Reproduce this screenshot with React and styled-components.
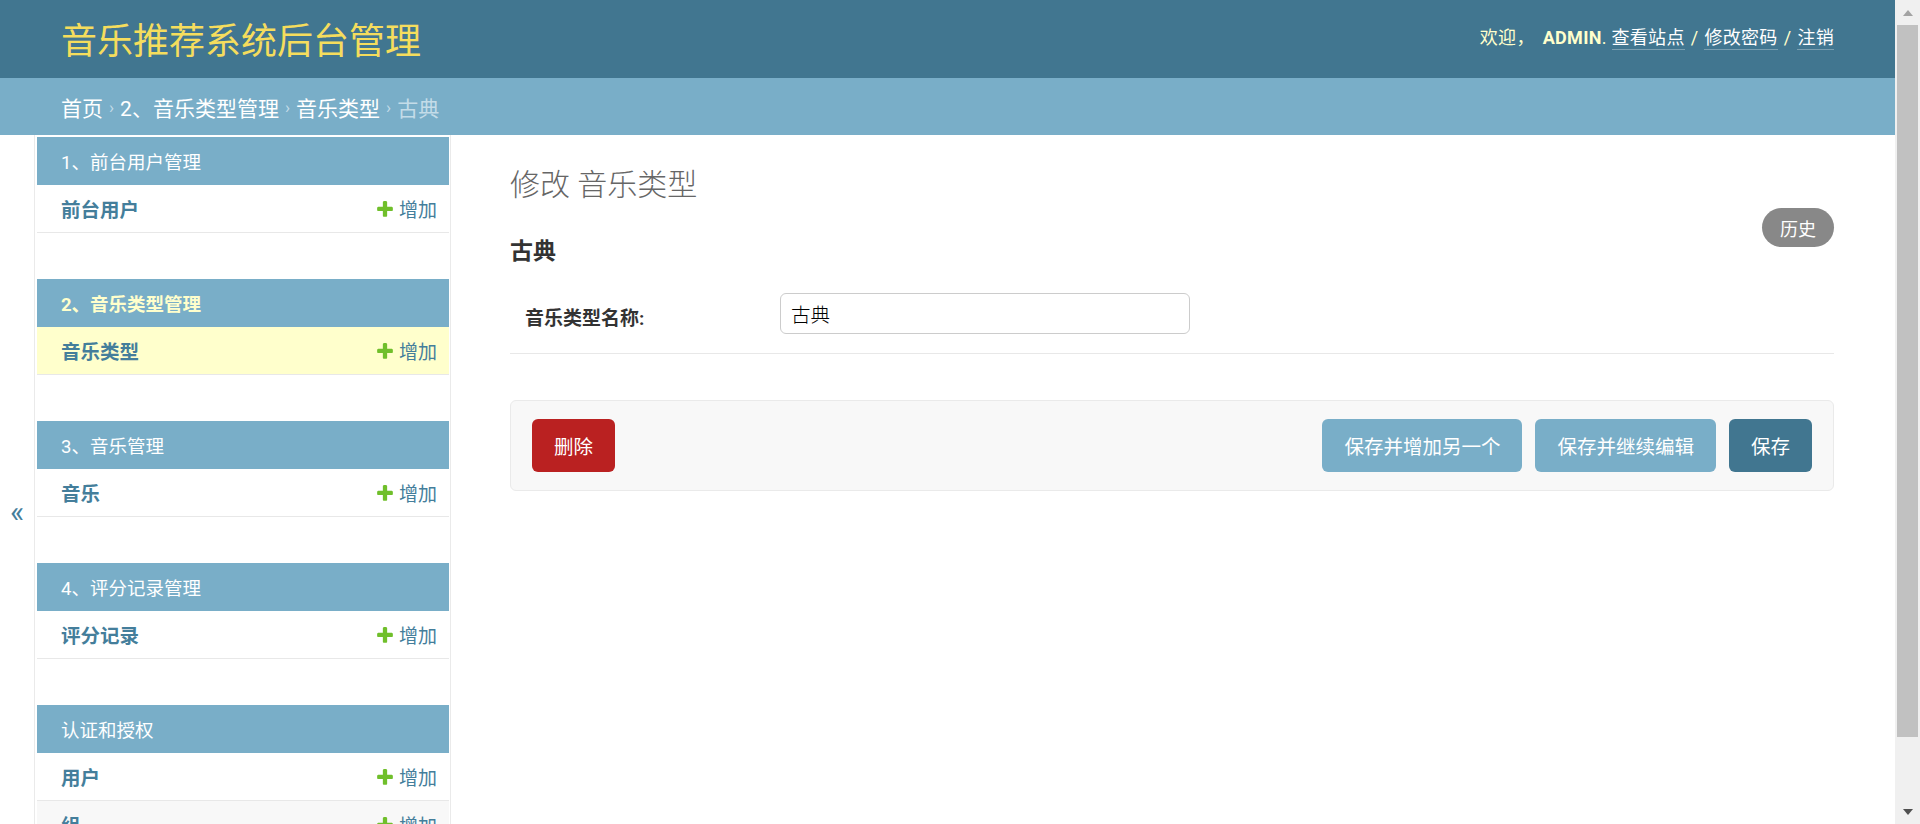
import React from "react";
import styled, { createGlobalStyle } from "styled-components";

const colors = {
  header: "#417690",
  accent: "#79aec8",
  link: "#447e9b",
  brand: "#f5dd5d",
  headerText: "#ffffcc",
  crumbText: "#c4dce8",
  hairline: "#e8e8e8",
  darkBody: "#333333",
  darkened: "#f8f8f8",
  selected: "#ffffcc",
  delete: "#ba2121",
  addGreen: "#70bf2b",
};

const GlobalStyle = createGlobalStyle`
  html, body {
    margin: 0;
    padding: 0;
    background: #fff;
    overflow: hidden;
  }
  body {
    font-family: Roboto, "Noto Sans CJK SC", "DejaVu Sans", sans-serif;
    color: ${colors.darkBody};
  }
  * { box-sizing: border-box; }
`;

const Viewport = styled.div`
  display: flex;
  height: 100vh;
  overflow: hidden;
`;

const Page = styled.div`
  flex: 1;
  min-width: 0;
  display: flex;
  flex-direction: column;
  overflow: hidden;
`;

const ScrollBar = styled.div`
  flex: 0 0 25px;
  display: flex;
  flex-direction: column;
  background: #f0f0f0;
`;

const ScrollButton = styled.div`
  flex: 0 0 25px;
  display: flex;
  align-items: center;
  justify-content: center;
`;

const Arrow = styled.span`
  width: 0;
  height: 0;
  border-left: 5.5px solid transparent;
  border-right: 5.5px solid transparent;
  ${({ $down }) =>
    $down
      ? "border-top: 6px solid #505050;"
      : "border-bottom: 6px solid #a3a3a3;"}
`;

const ScrollTrack = styled.div`
  flex: 1;
  padding: 0 2px;
`;

const ScrollThumb = styled.div`
  height: 712px;
  background: #c1c1c1;
`;

const Header = styled.header`
  display: flex;
  align-items: center;
  justify-content: space-between;
  flex: 0 0 78px;
  padding: 0 61px;
  background: ${colors.header};
  color: ${colors.headerText};
`;

const SiteName = styled.h1`
  margin: 6px 0 0;
  font-size: 36px;
  line-height: 44px;
  font-weight: 400;
  color: ${colors.brand};
`;

const UserTools = styled.div`
  font-size: 18px;
  letter-spacing: 0.3px;
  color: ${colors.headerText};
  margin-bottom: 6px;
`;

const UserName = styled.strong`
  font-weight: 700;
  text-transform: uppercase;
  margin-left: 8px;
`;

const ToolLink = styled.a`
  color: #fff;
  text-decoration: none;
  border-bottom: 1px solid rgba(255, 255, 255, 0.3);
  padding-bottom: 1px;
`;

const Sep = styled.span`
  margin: 0 6px;
`;

const Breadcrumbs = styled.nav`
  display: flex;
  align-items: center;
  flex: 0 0 57px;
  padding: 0 61px;
  background: ${colors.accent};
  color: ${colors.crumbText};
  font-size: 21px;
`;

const Crumb = styled.a`
  color: #fff;
  text-decoration: none;
`;

const CrumbSep = styled.span`
  margin: 0 6px;
  font-size: 17px;
  color: ${colors.crumbText};
`;

const Main = styled.div`
  display: flex;
  align-items: stretch;
  flex: 0 0 auto;
`;

const Toggle = styled.button`
  flex: 0 0 35px;
  display: flex;
  align-items: center;
  justify-content: center;
  padding: 0 0 6px;
  border: 0;
  border-right: 1px solid #eaeaea;
  background: #fff;
  color: ${colors.link};
  font-family: Roboto, sans-serif;
  font-size: 30px;
  line-height: 1;
  cursor: pointer;
`;

const NavSidebar = styled.nav`
  flex: 0 0 416px;
  padding: 2px 1px 0 2px;
  border-right: 1px solid #eaeaea;
`;

const Module = styled.div`
  margin-bottom: 46px;
`;

const Caption = styled.div`
  height: 48px;
  display: flex;
  align-items: center;
  padding: 0 24px;
  background: ${colors.accent};
  color: ${({ $current }) => ($current ? colors.headerText : "#fff")};
  font-weight: ${({ $current }) => ($current ? 700 : 400)};
  font-size: 18.5px;
`;

const ModelRow = styled.div`
  height: 48px;
  display: flex;
  align-items: center;
  justify-content: space-between;
  padding: 0 12px 0 24px;
  border-bottom: 1px solid ${colors.hairline};
  background: ${({ $current, $even }) =>
    $current ? colors.selected : $even ? colors.darkened : "#fff"};
`;

const ModelLink = styled.a`
  color: ${colors.link};
  font-weight: 700;
  font-size: 19.5px;
  text-decoration: none;
`;

const AddLink = styled.a`
  display: flex;
  align-items: center;
  gap: 4px;
  color: ${colors.link};
  font-size: 19px;
  text-decoration: none;
`;

const Content = styled.main`
  flex: 1;
  padding: 31px 61px 20px 59px;
`;

const Title = styled.h1`
  margin: 0;
  font-size: 30px;
  line-height: 38px;
  font-weight: 300;
  color: #666;
`;

const SubHeader = styled.div`
  display: flex;
  justify-content: space-between;
  align-items: flex-start;
  margin-top: 4px;
`;

const ObjectName = styled.h2`
  margin: 29px 0 0;
  font-size: 23px;
  line-height: 30px;
  font-weight: 700;
  color: ${colors.darkBody};
`;

const HistoryButton = styled.a`
  display: inline-flex;
  align-items: center;
  height: 39px;
  padding: 0 18px;
  border-radius: 20px;
  background: #888;
  color: #fff;
  font-size: 18px;
  text-decoration: none;
`;

const FormRow = styled.div`
  display: flex;
  align-items: center;
  margin-top: 10px;
  padding: 16px 15px 19px;
  border-bottom: 1px solid ${colors.hairline};
`;

const Label = styled.label`
  flex: 0 0 255px;
  font-weight: 700;
  font-size: 19px;
  color: ${colors.darkBody};
  padding-top: 6px;
`;

const TextInput = styled.input`
  width: 410px;
  height: 41px;
  padding: 0 10px;
  border: 1px solid #ccc;
  border-radius: 6px;
  font-family: Roboto, "Noto Sans CJK SC", sans-serif;
  font-size: 19.5px;
  font-weight: 300;
  color: #000;
  outline: none;
`;

const SubmitRow = styled.div`
  display: flex;
  align-items: center;
  gap: 13px;
  margin-top: 46px;
  padding: 18px 21px;
  background: ${colors.darkened};
  border: 1px solid #eaeaea;
  border-radius: 6px;
`;

const Button = styled.button`
  height: 53px;
  padding: 0 22px;
  border: 0;
  border-radius: 6px;
  font-family: Roboto, "Noto Sans CJK SC", sans-serif;
  font-size: 19.5px;
  font-weight: 400;
  color: #fff;
  cursor: pointer;
  background: ${({ $variant }) =>
    $variant === "delete"
      ? colors.delete
      : $variant === "default"
      ? colors.header
      : colors.accent};
  margin-left: ${({ $push }) => ($push ? "auto" : "0")};
`;

function PlusIcon() {
  return (
    <svg width="20" height="20" viewBox="0 0 1792 1792">
      <path
        fill={colors.addGreen}
        d="M1600 796v192q0 40-28 68t-68 28h-416v416q0 40-28 68t-68 28h-192q-40 0-68-28t-28-68v-416h-416q-40 0-68-28t-28-68v-192q0-40 28-68t68-28h416v-416q0-40 28-68t68-28h192q40 0 68 28t28 68v416h416q40 0 68 28t28 68z"
      />
    </svg>
  );
}

const apps = [
  { name: "1、前台用户管理", models: ["前台用户"] },
  { name: "2、音乐类型管理", models: ["音乐类型"], current: true },
  { name: "3、音乐管理", models: ["音乐"] },
  { name: "4、评分记录管理", models: ["评分记录"] },
  { name: "认证和授权", models: ["用户", "组"] },
];

export default function App() {
  return (
    <Viewport>
      <GlobalStyle />
      <Page>
        <Header>
          <SiteName>音乐推荐系统后台管理</SiteName>
          <UserTools>
            欢迎，
            <UserName>admin</UserName>.{" "}
            <ToolLink>查看站点</ToolLink>
            <Sep>/</Sep>
            <ToolLink>修改密码</ToolLink>
            <Sep>/</Sep>
            <ToolLink>注销</ToolLink>
          </UserTools>
        </Header>
        <Breadcrumbs>
          <Crumb>首页</Crumb>
          <CrumbSep>›</CrumbSep>
          <Crumb>2、音乐类型管理</Crumb>
          <CrumbSep>›</CrumbSep>
          <Crumb>音乐类型</Crumb>
          <CrumbSep>›</CrumbSep>
          古典
        </Breadcrumbs>
        <Main>
          <Toggle>«</Toggle>
          <NavSidebar>
            {apps.map((app) => (
              <Module key={app.name}>
                <Caption $current={app.current}>{app.name}</Caption>
                {app.models.map((m, i) => (
                  <ModelRow key={m} $current={app.current} $even={i % 2 === 1}>
                    <ModelLink>{m}</ModelLink>
                    <AddLink>
                      <PlusIcon />
                      增加
                    </AddLink>
                  </ModelRow>
                ))}
              </Module>
            ))}
          </NavSidebar>
          <Content>
            <Title>修改 音乐类型</Title>
            <SubHeader>
              <ObjectName>古典</ObjectName>
              <HistoryButton>历史</HistoryButton>
            </SubHeader>
            <FormRow>
              <Label>音乐类型名称:</Label>
              <TextInput defaultValue="古典" />
            </FormRow>
            <SubmitRow>
              <Button $variant="delete">删除</Button>
              <Button $push>保存并增加另一个</Button>
              <Button>保存并继续编辑</Button>
              <Button $variant="default">保存</Button>
            </SubmitRow>
          </Content>
        </Main>
      </Page>
      <ScrollBar>
        <ScrollButton>
          <Arrow />
        </ScrollButton>
        <ScrollTrack>
          <ScrollThumb />
        </ScrollTrack>
        <ScrollButton>
          <Arrow $down />
        </ScrollButton>
      </ScrollBar>
    </Viewport>
  );
}
